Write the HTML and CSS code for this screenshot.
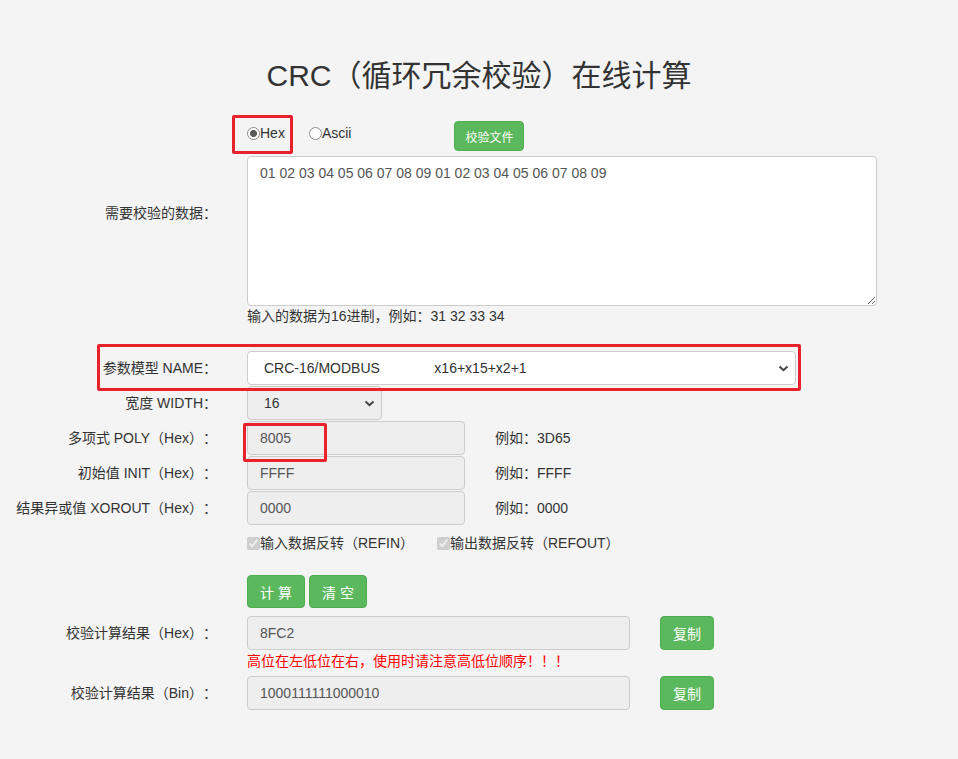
FILE: index.html
```html
<!DOCTYPE html>
<html lang="zh-CN">
<head>
<meta charset="utf-8">
<title>CRC（循环冗余校验）在线计算</title>
<link rel="stylesheet" href="styles.css">
</head>
<body>
<div class="page">
  <h1 class="title">CRC（循环冗余校验）在线计算</h1>

  <div class="row radio-row">
    <div class="label"></div>
    <div class="field radios">
      <label class="radio"><input type="radio" name="fmt" checked>Hex</label>
      <label class="radio"><input type="radio" name="fmt">Ascii</label>
      <button class="btn btn-file" type="button">校验文件</button>
    </div>
  </div>

  <div class="row data-row">
    <div class="label data-label">需要校验的数据：</div>
    <div class="field">
      <textarea class="textarea">01 02 03 04 05 06 07 08 09 01 02 03 04 05 06 07 08 09</textarea>
    </div>
  </div>
  <div class="row hint-row">
    <div class="label"></div>
    <div class="field hint">输入的数据为16进制，例如：31 32 33 34</div>
  </div>

  <div class="row param-row first-param">
    <div class="label">参数模型 NAME：</div>
    <div class="field">
      <div class="select-wrap name-wrap">
        <select class="select">
          <option>CRC-16/MODBUS&nbsp;&nbsp;&nbsp;&nbsp;&nbsp;&nbsp;&nbsp;&nbsp;&nbsp;&nbsp;&nbsp;&nbsp;&nbsp;&nbsp;x16+x15+x2+1</option>
        </select>
        <svg class="chev" width="11" height="7" viewBox="0 0 11 7"><polyline points="1.5,1.5 5.5,5.2 9.5,1.5" fill="none" stroke="#444" stroke-width="2"/></svg>
      </div>
    </div>
  </div>

  <div class="row param-row">
    <div class="label">宽度 WIDTH：</div>
    <div class="field">
      <div class="select-wrap width-wrap">
        <select class="select select-disabled" disabled>
          <option>16</option>
        </select>
        <svg class="chev" width="11" height="7" viewBox="0 0 11 7"><polyline points="1.5,1.5 5.5,5.2 9.5,1.5" fill="none" stroke="#444" stroke-width="2"/></svg>
      </div>
    </div>
  </div>

  <div class="row param-row">
    <div class="label">多项式 POLY（Hex）：</div>
    <div class="field">
      <input class="input input-param" type="text" value="8005" readonly>
      <span class="example">例如：3D65</span>
    </div>
  </div>

  <div class="row param-row">
    <div class="label">初始值 INIT（Hex）：</div>
    <div class="field">
      <input class="input input-param" type="text" value="FFFF" readonly>
      <span class="example">例如：FFFF</span>
    </div>
  </div>

  <div class="row param-row">
    <div class="label">结果异或值 XOROUT（Hex）：</div>
    <div class="field">
      <input class="input input-param" type="text" value="0000" readonly>
      <span class="example">例如：0000</span>
    </div>
  </div>

  <div class="row check-row">
    <div class="label"></div>
    <div class="field checks">
      <label class="check"><input type="checkbox" checked disabled>输入数据反转（REFIN）</label>
      <label class="check"><input type="checkbox" checked disabled>输出数据反转（REFOUT）</label>
    </div>
  </div>

  <div class="row action-row">
    <div class="label"></div>
    <div class="field actions">
      <button class="btn btn-action" type="button">计 算</button>
      <button class="btn btn-action" type="button">清 空</button>
    </div>
  </div>

  <div class="row result-row">
    <div class="label">校验计算结果（Hex）：</div>
    <div class="field">
      <input class="input input-result" type="text" value="8FC2" readonly>
      <button class="btn btn-copy" type="button">复制</button>
    </div>
  </div>
  <div class="row warn-row">
    <div class="label"></div>
    <div class="field warn">高位在左低位在右，使用时请注意高低位顺序！！！</div>
  </div>
  <div class="row result-row bin-row">
    <div class="label">校验计算结果（Bin）：</div>
    <div class="field">
      <input class="input input-result" type="text" value="1000111111000010" readonly>
      <button class="btn btn-copy" type="button">复制</button>
    </div>
  </div>

  <div class="mark mark-hex"></div>
  <div class="mark mark-name"></div>
  <div class="mark mark-poly"></div>
</div>
</body>
</html>
```

FILE: styles.css
```css
* { box-sizing: border-box; }

html, body {
  margin: 0;
  padding: 0;
  background: #f4f4f4;
}

body {
  font-family: "Liberation Sans", Arial, "Noto Sans CJK SC", sans-serif;
  font-size: 14px;
  color: #333;
  line-height: 20px;
  text-spacing-trim: space-all;
}

.page {
  position: relative;
  width: 958px;
  height: 759px;
  overflow: hidden;
}

.title {
  margin: 0;
  padding-top: 57px;
  height: 96px;
  line-height: 38px;
  font-size: 30px;
  font-weight: normal;
  text-align: center;
  color: #333;
  font-family: "Liberation Sans", Arial, "Noto Sans CJK SC", sans-serif;
}

.row {
  display: flex;
  align-items: center;
}

.label {
  width: 217px;
  flex: none;
  text-align: right;
  white-space: nowrap;
  color: #333;
}

.field {
  margin-left: 30px;
  display: flex;
  align-items: center;
}

/* radio row */
.radio-row {
  margin-top: 25px;
  height: 30px;
  align-items: flex-start;
}
.radios { align-items: flex-start; }
.radio {
  display: flex;
  align-items: center;
  line-height: 24px;
  height: 24px;
  color: #333;
}
.radio input {
  -webkit-appearance: none;
  appearance: none;
  margin: 0;
  width: 13px;
  height: 13px;
  border: 1px solid #8a8a8a;
  border-radius: 50%;
  background: #fff;
}
.radio input:checked {
  background: radial-gradient(circle, #5a5a5a 0 3.2px, #fff 3.8px);
}
.radio + .radio { margin-left: 24px; }

.btn {
  font-family: "Liberation Sans", Arial, "Noto Sans CJK SC", sans-serif;
  background: #5cb85c;
  border: 1px solid #4cae4c;
  border-radius: 4px;
  color: #fff;
  padding: 0;
  cursor: pointer;
}
.btn-file {
  margin-left: 103px;
  width: 70px;
  height: 30px;
  font-size: 12px;
}

/* data */
.data-row {
  margin-top: 5px;
  height: 150px;
  align-items: flex-start;
}
.data-label { margin-top: 47px; }
.textarea {
  width: 630px;
  height: 150px;
  padding: 6px 12px;
  border: 1px solid #ccc;
  border-radius: 4px;
  background: #fff;
  color: #555;
  font-family: "Liberation Sans", Arial, "Noto Sans CJK SC", sans-serif;
  font-size: 14px;
  line-height: 20px;
  resize: vertical;
  display: block;
}
.hint-row { height: 20px; }
.hint { color: #333; }

/* params */
.param-row {
  height: 34px;
  margin-top: 1px;
}
.first-param { margin-top: 25px; }

.select-wrap {
  position: relative;
}
.name-wrap { width: 549px; }
.width-wrap { width: 135px; }

.select {
  -webkit-appearance: none;
  appearance: none;
  width: 100%;
  height: 34px;
  padding: 0 30px 0 16px;
  border: 1px solid #ccc;
  border-radius: 4px;
  background: #fff;
  color: #333;
  font-family: "Liberation Sans", Arial, "Noto Sans CJK SC", sans-serif;
  font-size: 14px;
  display: block;
}
.select-disabled {
  background: #eee;
  color: #333;
  opacity: 1;
}
.chev {
  position: absolute;
  right: 7px;
  top: 14px;
  pointer-events: none;
}

.input {
  height: 34px;
  padding: 6px 12px;
  border: 1px solid #ccc;
  border-radius: 4px;
  background: #eee;
  color: #555;
  font-family: "Liberation Sans", Arial, "Noto Sans CJK SC", sans-serif;
  font-size: 14px;
  display: block;
  outline: none;
}
.input-param { width: 218px; }
.example {
  margin-left: 30px;
  color: #333;
}

/* checkboxes */
.check-row {
  height: 34px;
  margin-top: 1px;
}
.check {
  display: flex;
  align-items: center;
  color: #333;
}
.check input {
  margin: 0;
  width: 13px;
  height: 13px;
}
.check + .check { margin-left: 23px; }

/* actions */
.action-row {
  margin-top: 15px;
  height: 33px;
}
.btn-action {
  width: 58px;
  height: 33px;
  font-size: 14px;
}
.btn-action + .btn-action { margin-left: 4px; }

/* results */
.result-row {
  margin-top: 8px;
  height: 34px;
}
.bin-row { margin-top: 5px; }
.input-result { width: 383px; }
.btn-copy {
  margin-left: 30px;
  width: 54px;
  height: 34px;
  font-size: 14px;
}
.warn-row {
  margin-top: 1px;
  height: 20px;
}
.warn { color: #f00; }

/* annotation marks */
.mark {
  position: absolute;
  border: 3px solid #e8212b;
  border-radius: 2px;
  pointer-events: none;
}
.mark-hex { left: 232px; top: 115px; width: 61px; height: 39px; }
.mark-name { left: 97px; top: 344px; width: 704px; height: 47px; }
.mark-poly { left: 243px; top: 423px; width: 84px; height: 39px; }
```
